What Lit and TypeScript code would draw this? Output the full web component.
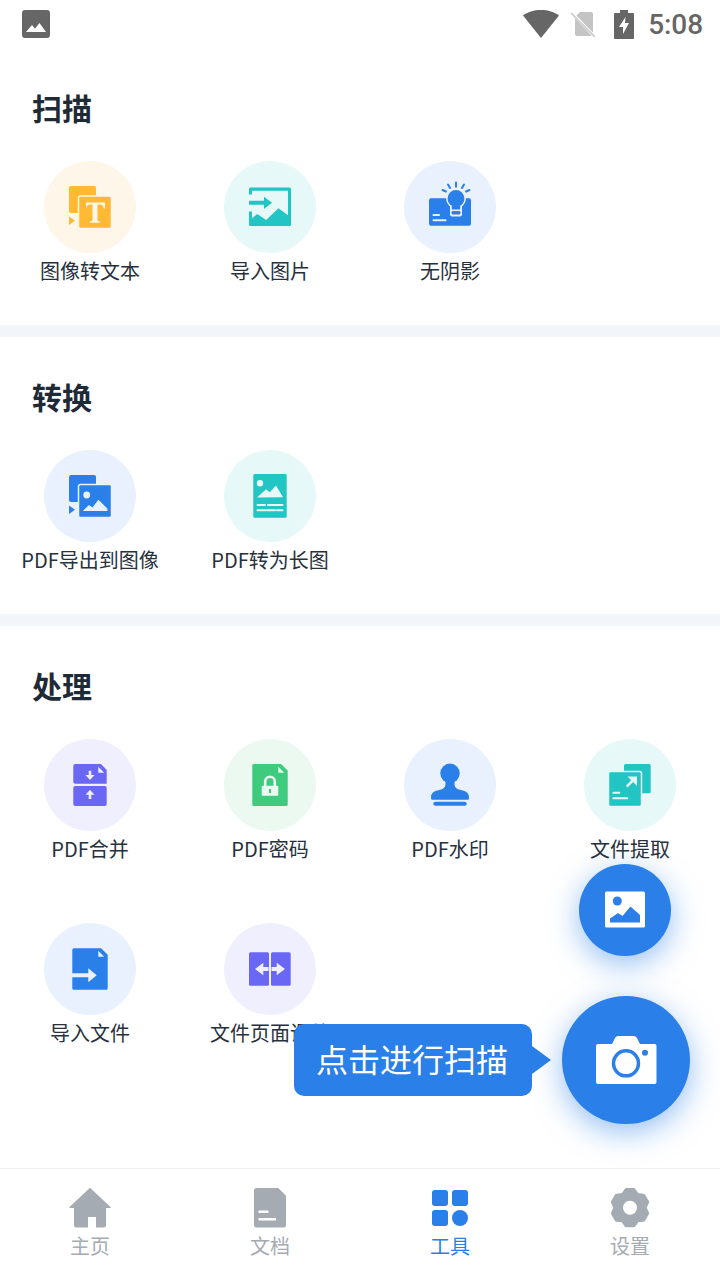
import { LitElement, css, html, svg } from "lit";
import { customElement } from "lit/decorators.js";

type Tool = { label: string; tone: string; icon: unknown };
type Section = { title: string; tools: Tool[] };

const fold = svg`<path class="tint" d="M54.300 27.700l5.900 6h-5.900z" />`;

const stackBack = svg`
  <rect class="fg" x="25" y="25" width="27" height="27" rx="2" />
  <path class="fg" d="M25 55.500l6 4.200-6 4.300z" />
`;

const icons = {
  imageText: svg`
    ${stackBack}
    <rect class="fg" x="34.500" y="35" width="33" height="32.500" rx="2" stroke="var(--tint)" stroke-width="1.500" />
    <path class="tint" d="M42 41.500h19v6h-1.300c-.3-2.600-1.500-3.800-4.500-3.900h-1.700v15.300c0 1 .7 1.400 2.700 1.500v1.300H45.800v-1.300c2-.1 2.700-.5 2.700-1.500V43.600h-1.700c-3 .1-4.200 1.300-4.500 3.900H42z" />
  `,
  importImage: svg`
    <rect class="fg" x="25" y="26.500" width="42" height="38.500" rx="1.500" />
    <path class="tint" d="M28 29.800h36v24.400l-9.500-7-12.300 11.800-9-6-5.200 4.300z" />
    <path class="tint" d="M24 33.500h5v17h-5z" />
    <path class="fg" d="M25 39.700h15v-4l8 6-8 6.300v-4.300H25z" />
  `,
  noShadow: svg`
    <rect class="fg" x="25" y="37.300" width="42" height="27.500" rx="2" />
    <circle class="tint" cx="52" cy="37.500" r="10" />
    <rect class="tint" x="46" y="43" width="12" height="12.500" rx="2" />
    <circle class="fg" cx="52" cy="37.500" r="8.400" />
    <rect class="fg" x="47.800" y="42" width="8.400" height="6.500" />
    <rect class="fg" x="47.600" y="50" width="8.800" height="3.600" rx="1" />
    <path class="line" d="M52 21.500v4.200M44 23.500l2 3.500M60 23.500l-2 3.500M38.500 29l3.500 1.500M65.500 29l-3.500 1.500" />
    <path class="tint-line" d="M29.500 54h5.500M29.500 59.300h12" />
  `,
  exportImage: svg`
    ${stackBack}
    <rect class="fg" x="34.500" y="34.500" width="33" height="33" rx="2" stroke="var(--tint)" stroke-width="1.500" />
    <circle class="tint" cx="42.700" cy="45" r="3.400" />
    <path class="tint" d="M38.800 61l6.200-6 3.400 2.400 6-7.600 9 8.800V61z" />
  `,
  longImage: svg`
    <rect class="fg" x="29.300" y="24" width="33.400" height="43.700" rx="1.500" />
    <circle class="tint" cx="36" cy="33.300" r="3.200" />
    <path class="tint" d="M33 47.500l9-8.200 3.800 3 6.200-6.800 7 11.800z" />
    <path class="tint-line" d="M33.500 55h7.500M44 55h14.500M33.500 60.300h17.500M53 60.300h5.500" />
  `,
  merge: svg`
    <path class="fg" d="M31.300 25H57l5.700 6v13.700H31.300a2 2 0 0 1-2-2V27a2 2 0 0 1 2-2z" />
    ${fold}
    <rect class="fg" x="29.300" y="47" width="33.400" height="20" rx="2" />
    <path class="tint" d="M44.700 31.700h2.600v4.300h3.200L46 41l-4.500-5h3.200zM44.700 60h2.600v-4.300h3.200L46 50.700l-4.500 5h3.200z" />
  `,
  password: svg`
    <path class="fg" d="M30 25h27l6.700 6.500v34a1.500 1.500 0 0 1-1.500 1.500H29.800a1.500 1.500 0 0 1-1.500-1.500v-39a1.500 1.500 0 0 1 1.700-1.500z" />
    ${fold}
    <path class="tint-line thick" d="M41.200 47v-4.500a4.800 4.800 0 0 1 9.600 0V47" />
    <rect class="tint" x="37.700" y="46.700" width="16.600" height="10" rx="1" />
    <rect class="fg" x="45" y="50" width="2" height="4" />
  `,
  watermark: svg`
    <circle class="fg" cx="46" cy="34.300" r="9.700" />
    <path class="fg" d="M41.500 40h9v4.500c0 4 2 5.500 5.500 6.300 5 1.100 9 2.700 9 7.400v1a1.500 1.500 0 0 1-1.500 1.500h-35a1.500 1.500 0 0 1-1.500-1.500v-1c0-4.700 4-6.300 9-7.400 3.500-.8 5.500-2.300 5.500-6.300z" />
    <rect class="fg" x="29.300" y="62.700" width="33.400" height="4" rx="2" />
  `,
  extract: svg`
    <rect class="fg" x="40" y="25" width="26.700" height="29.300" rx="1.500" />
    <rect class="fg" x="24.500" y="32.500" width="33" height="35" rx="2" stroke="var(--tint)" stroke-width="1.500" />
    <path class="tint-line thick" d="M42.700 47.700l7-7" />
    <path class="tint" d="M43.500 37.500h9.500V47z" />
    <path class="tint-line" d="M29.300 53.700h6M29.300 59.300h14" />
  `,
  importFile: svg`
    <path class="fg" d="M30 25.300h27l6.700 6.500v33.400a1.500 1.500 0 0 1-1.500 1.500H29.800a1.500 1.500 0 0 1-1.500-1.500V27a1.700 1.700 0 0 1 1.700-1.700z" />
    ${fold}
    <path class="tint" d="M28 50.300h16.300v-5l8.400 7-8.400 7v-5H28z" />
  `,
  pages: svg`
    <rect class="fg" x="25" y="29.300" width="20" height="33.400" rx="1.500" />
    <rect class="fg" x="47" y="29.300" width="19.700" height="33.400" rx="1.500" />
    <path class="tint" d="M31 46l8.300-6.300v4.300h5.200v4h-5.200v4.300zM61 46l-8.300-6.300v4.300h-5.200v4h5.200v4.300z" />
  `,
};

const sections: Section[] = [
  {
    title: "扫描",
    tools: [
      { label: "图像转文本", tone: "yellow", icon: icons.imageText },
      { label: "导入图片", tone: "teal", icon: icons.importImage },
      { label: "无阴影", tone: "blue", icon: icons.noShadow },
    ],
  },
  {
    title: "转换",
    tools: [
      { label: "PDF导出到图像", tone: "blue", icon: icons.exportImage },
      { label: "PDF转为长图", tone: "teal", icon: icons.longImage },
    ],
  },
  {
    title: "处理",
    tools: [
      { label: "PDF合并", tone: "purple", icon: icons.merge },
      { label: "PDF密码", tone: "green", icon: icons.password },
      { label: "PDF水印", tone: "blue", icon: icons.watermark },
      { label: "文件提取", tone: "teal", icon: icons.extract },
      { label: "导入文件", tone: "blue", icon: icons.importFile },
      { label: "文件页面调整", tone: "purple", icon: icons.pages },
    ],
  },
];

// six rounded teeth, one pointing straight up
function gearPoints(cx: number, cy: number) {
  const pts: string[] = [];
  for (let i = 0; i < 6; i++) {
    const mid = i * 60 - 90;
    for (const [offset, r] of [
      [-30, 14.5],
      [-12, 18],
      [12, 18],
    ]) {
      const a = ((mid + offset) * Math.PI) / 180;
      pts.push(`${(cx + r * Math.cos(a)).toFixed(1)},${(cy + r * Math.sin(a)).toFixed(1)}`);
    }
  }
  return pts.join(" ");
}

const navItems = [
  {
    label: "主页",
    active: false,
    icon: svg`<path d="M20 .7L40.500 20a.6.6 0 0 1-.4 1H36v17a2.500 2.500 0 0 1-2.500 2.500H26V30h-8v10.500H6.500A2.500 2.500 0 0 1 4 38V21H-.1a.6.6 0 0 1-.4-1z" />`,
  },
  {
    label: "文档",
    active: false,
    icon: svg`
      <path d="M6.500 1h21.800L36 8.700V38a2.500 2.500 0 0 1-2.500 2.500h-27A2.500 2.500 0 0 1 4 38V3.500A2.500 2.500 0 0 1 6.500 1z" />
      <path class="nav-cut" d="M9.500 24.700h8M9.500 32.300h15.500" />
    `,
  },
  {
    label: "工具",
    active: true,
    icon: svg`
      <rect x="2" y="3" width="16" height="16" rx="3" />
      <rect x="22" y="3" width="16" height="16" rx="3" />
      <rect x="2" y="23" width="16" height="16" rx="3" />
      <circle cx="30" cy="31" r="8" />
    `,
  },
  {
    label: "设置",
    active: false,
    icon: svg`
      <polygon class="gear" points=${gearPoints(20, 20.700)} />
      <circle class="nav-hole" cx="20" cy="20.700" r="7" />
    `,
  },
];

@customElement("app-root")
export class AppRoot extends LitElement {
  static styles = css`
    :host {
      display: flex;
      flex-direction: column;
      position: relative;
      width: 720px;
      height: 1280px;
      overflow: hidden;
      background: #fff;
      font-family: "Noto Sans CJK SC", "Noto Sans", sans-serif;
      color: #27313d;
    }

    .status {
      height: 48px;
      flex: none;
      display: flex;
      align-items: center;
      padding: 0 17px 0 22px;
      color: #666;
    }
    .status svg {
      display: block;
      fill: currentColor;
    }
    .status .spacer {
      flex: 1;
    }
    .status .wifi {
      margin-right: 12px;
    }
    .status .sim {
      margin-right: 17px;
    }
    .status .battery {
      margin-right: 14px;
    }
    .status .time {
      font-family: Roboto, sans-serif;
      font-weight: 500;
      font-size: 28px;
      line-height: 48px;
      letter-spacing: -0.1px;
      position: relative;
      top: 1px;
    }

    .content {
      flex: 1;
      min-height: 0;
    }
    .section {
      padding: 39px 0 40px;
      border-bottom: 12px solid #f2f5fa;
    }
    .section:last-child {
      border-bottom: none;
    }
    .section h2 {
      margin: 0 0 34px 32px;
      font-size: 30px;
      line-height: 40px;
      font-weight: 700;
      color: #1f2a37;
    }
    .grid {
      display: grid;
      grid-template-columns: repeat(4, 180px);
      row-gap: 60px;
    }
    .tool {
      display: flex;
      flex-direction: column;
      align-items: center;
      gap: 4px;
    }
    .circle {
      display: block;
      width: 92px;
      height: 92px;
      border-radius: 50%;
      background: var(--tint);
      color: var(--fg);
    }
    .label {
      font-size: 20px;
      line-height: 28px;
      white-space: nowrap;
    }
    .yellow {
      --fg: #ffb933;
      --tint: #fff6ea;
    }
    .teal {
      --fg: #22c4c4;
      --tint: #e7f8f8;
    }
    .blue {
      --fg: #2a7fe8;
      --tint: #e8f1fd;
    }
    .purple {
      --fg: #6a67f5;
      --tint: #f0effd;
    }
    .green {
      --fg: #3ecb7e;
      --tint: #ebf9f1;
    }
    .fg {
      fill: var(--fg);
    }
    .tint {
      fill: var(--tint);
    }
    .line,
    .tint-line {
      fill: none;
      stroke-width: 2;
      stroke-linecap: round;
    }
    .line {
      stroke: var(--fg);
    }
    .tint-line {
      stroke: var(--tint);
    }
    .tint-line.thick {
      stroke-width: 2.600;
      stroke-linecap: butt;
    }

    .fab {
      position: absolute;
      border-radius: 50%;
      background: #2a7fe8;
      box-shadow: 0 8px 30px rgba(42, 127, 232, 0.5);
    }
    .fab svg {
      display: block;
    }
    .fab-image {
      left: 579px;
      top: 864px;
      width: 92px;
      height: 92px;
    }
    .fab-camera {
      left: 562px;
      top: 996px;
      width: 128px;
      height: 128px;
    }
    .tooltip {
      position: absolute;
      left: 294px;
      top: 1024px;
      width: 238px;
      height: 72px;
      box-sizing: border-box;
      padding-left: 22px;
      border-radius: 10px;
      background: #2a7fe8;
      color: #fff;
      font-size: 32px;
      line-height: 68px;
      white-space: nowrap;
    }
    .tooltip::after {
      content: "";
      position: absolute;
      left: 100%;
      top: 22px;
      border-left: 19px solid #2a7fe8;
      border-top: 14px solid transparent;
      border-bottom: 14px solid transparent;
    }

    .nav {
      height: 111px;
      flex: none;
      position: relative;
      display: grid;
      grid-template-columns: repeat(4, 1fr);
      border-top: 1px solid #eceef1;
      background: #fff;
    }
    .nav-item {
      display: flex;
      flex-direction: column;
      align-items: center;
      padding-top: 18px;
      color: #a5abb3;
      font-size: 20px;
      line-height: 28px;
    }
    .nav-item.active {
      color: #2a7fe8;
    }
    .nav-item svg {
      display: block;
      width: 40px;
      height: 42px;
      margin-bottom: 3px;
      overflow: visible;
      fill: currentColor;
    }
    .nav-cut {
      fill: none;
      stroke: #fff;
      stroke-width: 2.400;
      stroke-linecap: round;
    }
    .nav-hole {
      fill: #fff;
    }
    .gear {
      stroke: currentColor;
      stroke-width: 4;
      stroke-linejoin: round;
    }
  `;

  private renderStatus() {
    return html`
      <div class="status">
        <svg width="28" height="28" viewBox="0 0 28 28">
          <path d="M3 0h22a3 3 0 0 1 3 3v22a3 3 0 0 1-3 3H3a3 3 0 0 1-3-3V3a3 3 0 0 1 3-3zm1 22h20l-6.500-9-4.500 5.800-3-3.800z" fill-rule="evenodd" />
        </svg>
        <span class="spacer"></span>
        <svg class="wifi" width="36" height="28" viewBox="0 0 36 28">
          <path d="M18 28L0 5.500C4.500 2 11 0 18 0s13.500 2 18 5.500z" />
        </svg>
        <svg class="sim" width="26" height="26" viewBox="0 0 26 26">
          <path fill="#c4c4c4" d="M9 1h11a2 2 0 0 1 2 2v20a2 2 0 0 1-2 2H6a2 2 0 0 1-2-2V6z" />
          <path d="M1 2l23 24" stroke="#fff" stroke-width="3" />
          <path d="M0 2l24 24" stroke="#c4c4c4" stroke-width="1.500" />
        </svg>
        <svg class="battery" width="20" height="29" viewBox="0 0 20 29">
          <path d="M6 0h8v3h5a1 1 0 0 1 1 1v24a1 1 0 0 1-1 1H1a1 1 0 0 1-1-1V4a1 1 0 0 1 1-1h5zm5.500 7L5 17h4v7l6-11h-4z" fill-rule="evenodd" />
        </svg>
        <span class="time">5:08</span>
      </div>
    `;
  }

  private renderFloating() {
    return html`
      <div class="fab fab-image">
        <svg width="92" height="92" viewBox="0 0 92 92">
          <rect x="26" y="27.500" width="40" height="36" rx="1.500" fill="#fff" />
          <circle cx="38.300" cy="37" r="4.500" fill="#2a7fe8" />
          <path d="M31 58.500v-4l8-5.500 4.500 3 8-9.500 9.500 8.500v7.500z" fill="#2a7fe8" />
        </svg>
      </div>
      <div class="tooltip">点击进行扫描</div>
      <div class="fab fab-camera">
        <svg width="128" height="128" viewBox="0 0 128 128">
          <path d="M36 48h14l3-6a4 4 0 0 1 3.500-2h15a4 4 0 0 1 3.500 2l3 6h14.500a2 2 0 0 1 2 2v36a2 2 0 0 1-2 2H36a2 2 0 0 1-2-2V50a2 2 0 0 1 2-2z" fill="#fff" />
          <circle cx="64" cy="67.300" r="12.500" fill="#fff" stroke="#2a7fe8" stroke-width="3.500" />
          <circle cx="83" cy="56.700" r="3" fill="#2a7fe8" />
        </svg>
      </div>
    `;
  }

  render() {
    return html`
      ${this.renderStatus()}
      <div class="content">
        ${sections.map(
          (section) => html`
            <section class="section">
              <h2>${section.title}</h2>
              <div class="grid">
                ${section.tools.map(
                  (tool) => html`
                    <div class="tool ${tool.tone}">
                      <svg class="circle" viewBox="0 0 92 92">${tool.icon}</svg>
                      <span class="label">${tool.label}</span>
                    </div>
                  `,
                )}
              </div>
            </section>
          `,
        )}
      </div>
      <nav class="nav">
        ${navItems.map(
          (item) => html`
            <div class="nav-item ${item.active ? "active" : ""}">
              <svg viewBox="0 0 40 42">${item.icon}</svg>
              <span>${item.label}</span>
            </div>
          `,
        )}
      </nav>
      ${this.renderFloating()}
    `;
  }
}
